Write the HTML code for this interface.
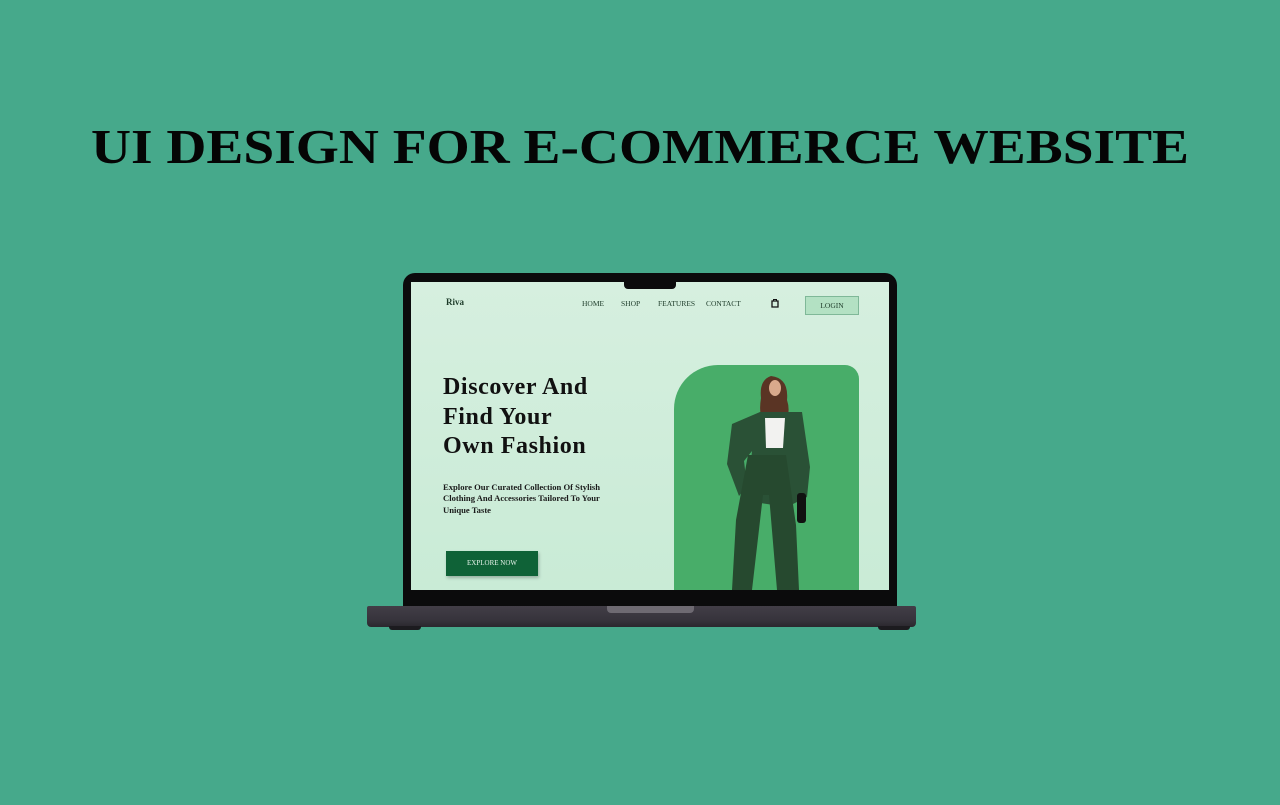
<!DOCTYPE html>
<html><head><meta charset="utf-8"><style>
*{margin:0;padding:0;box-sizing:border-box}
body{width:1280px;height:805px;background:#46a98b;position:relative;overflow:hidden;font-family:"Liberation Serif",serif}
.a{position:absolute}
</style></head><body>
<svg class="a" style="left:0;top:0" width="1280" height="805">
<text x="640" y="163" text-anchor="middle" textLength="1098" lengthAdjust="spacingAndGlyphs" font-family="Liberation Serif" font-weight="bold" font-size="49" fill="#050505">UI DESIGN FOR E-COMMERCE WEBSITE</text>
</svg>
<div class="a" style="left:403px;top:273px;width:494px;height:336px;background:#0b0b0c;border-radius:12px 12px 0 0"></div>
<div class="a" style="left:411px;top:282px;width:478px;height:308px;background:linear-gradient(#d6efdf,#c9ebd6);overflow:hidden">
  <div class="a" style="left:35px;top:15px;font-size:9px;font-weight:bold;color:#1c3a28">Riva</div>
  <div class="a" style="left:171px;top:17px;font-size:7.5px;color:#1c3a28">HOME</div>
  <div class="a" style="left:210px;top:17px;font-size:7.5px;color:#1c3a28">SHOP</div>
  <div class="a" style="left:247px;top:17px;font-size:7.5px;color:#1c3a28">FEATURES</div>
  <div class="a" style="left:295px;top:17px;font-size:7.5px;color:#1c3a28">CONTACT</div>
  <svg class="a" style="left:360px;top:16px" width="8" height="10"><path d="M1 3h6v6H1z" fill="none" stroke="#111" stroke-width="1.3"/><path d="M2.5 3V1.5h3V3" fill="none" stroke="#111" stroke-width="1"/></svg>
  <div class="a" style="left:394px;top:14px;width:54px;height:19px;background:#b3e1c3;border:1px solid #7fb898;font-size:7.5px;color:#1c3a28;text-align:center;line-height:17px">LOGIN</div>
  <div class="a" style="left:32px;top:91px;font-size:24px;line-height:29.5px;font-weight:bold;color:#111;letter-spacing:0.6px">Discover And<br>Find Your<br>Own Fashion</div>
  <div class="a" style="left:32px;top:200px;font-size:8.6px;line-height:11.3px;font-weight:bold;color:#1a1a1a;width:182px">Explore Our Curated Collection Of Stylish Clothing And Accessories Tailored To Your Unique Taste</div>
  <div class="a" style="left:35px;top:269px;width:92px;height:25px;background:#0f6237;box-shadow:1px 2px 3px rgba(0,0,0,.25);color:#e6f3ea;font-size:7px;text-align:center;line-height:25px">EXPLORE NOW</div>
  <div class="a" style="left:263px;top:83px;width:185px;height:240px;background:#48ad69;border-radius:44px 14px 14px 0"></div>
</div>
<svg class="a" style="left:0;top:0" width="1280" height="805">
<g fill="#2a5136">
<path d="M771 376 q-12 4 -10 22 q-3 18 4 26 l20 0 q6 -12 2 -24 q2 -22 -16 -24z" fill="#5a3424"/>
<ellipse cx="775" cy="388" rx="6" ry="8" fill="#d9a98c"/>
<path d="M760 412 l-28 12 l-5 40 l12 32 l8 -10 l-3 -25 l8 -10 l-5 50 l40 6 l20 -10 l3 -30 l-8 -55 z"/>
<path d="M765 418 h20 l-2 30 h-17 z" fill="#f2f2f0"/>
<path d="M748 455 h38 l10 70 l3 65 h-22 l-8 -95 l-6 0 l-11 95 h-20 l4 -70 z" fill="#26492f"/>
<rect x="797" y="493" width="9" height="30" rx="3" fill="#111"/>
</g>
</svg>
<div class="a" style="left:624px;top:281px;width:52px;height:8px;background:#0b0b0c;border-radius:0 0 4px 4px"></div>
<div class="a" style="left:367px;top:606px;width:549px;height:21px;background:linear-gradient(#423e47,#36333b 70%,#2a282e);border-radius:2px 2px 4px 4px"></div>
<div class="a" style="left:607px;top:606px;width:87px;height:7px;background:#6e6a72;border-radius:0 0 4px 4px"></div>
<div class="a" style="left:389px;top:626px;width:32px;height:4px;background:#1c1b1f;border-radius:0 0 3px 3px"></div>
<div class="a" style="left:878px;top:626px;width:32px;height:4px;background:#1c1b1f;border-radius:0 0 3px 3px"></div>
</body></html>
